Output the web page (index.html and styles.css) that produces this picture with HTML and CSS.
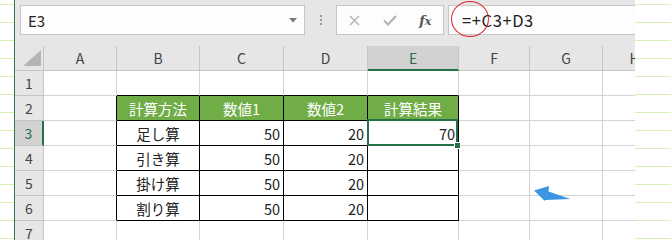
FILE: index.html
```html
<!DOCTYPE html>
<html>
<head>
    <meta charset="utf-8">
    <title>計算結果</title>
    <link rel="stylesheet" href="styles.css">
</head>
<body>
    <div class="page">
        <div class="excel">
            <div class="formula-bar">
                <div class="name-box">
                    <span class="name">E3</span>
                    <svg class="caret" width="8" height="5" viewBox="0 0 8 5"><path d="M0 0H8L4 4.5Z" fill="#7a7a7a"/></svg>
                </div>
                <div class="grip"><i></i><i></i><i></i></div>
                <div class="buttons">
                    <span class="btn"><svg width="11" height="11" viewBox="0 0 11 11"><path d="M1 1L10 10M10 1L1 10" stroke="#b0b0b0" stroke-width="1.4"/></svg></span>
                    <span class="btn"><svg width="14" height="11" viewBox="0 0 14 11"><path d="M1 5.5L5 9.5L13 1" fill="none" stroke="#b0b0b0" stroke-width="2"/></svg></span>
                    <span class="btn fx">f<span class="fx-x">x</span></span>
                </div>
                <div class="formula">=+C3+D3</div>
            </div>
            <div class="mark"></div>

            <div class="sheet">
                <!-- column header -->
                <div class="c hd corner"><span class="tri"></span></div>
                <div class="c hd">A</div>
                <div class="c hd">B</div>
                <div class="c hd">C</div>
                <div class="c hd">D</div>
                <div class="c hd sel">E</div>
                <div class="c hd">F</div>
                <div class="c hd">G</div>
                <div class="c hd">H</div>
                <!-- 1 -->
                <div class="c rh">1</div>
                <div class="c"></div>
                <div class="c tt"></div>
                <div class="c tt"></div>
                <div class="c tt"></div>
                <div class="c tt"></div>
                <div class="c"></div>
                <div class="c"></div>
                <div class="c"></div>
                <!-- 2 -->
                <div class="c rh">2</div>
                <div class="c tl"></div>
                <div class="c t th">計算方法</div>
                <div class="c t th">数値1</div>
                <div class="c t th">数値2</div>
                <div class="c t th">計算結果</div>
                <div class="c"></div>
                <div class="c"></div>
                <div class="c"></div>
                <!-- 3 -->
                <div class="c rh sel">3</div>
                <div class="c tl"></div>
                <div class="c t">足し算</div>
                <div class="c t num">50</div>
                <div class="c t num">20</div>
                <div class="c t num cur">70</div>
                <div class="c"></div>
                <div class="c"></div>
                <div class="c"></div>
                <!-- 4 -->
                <div class="c rh">4</div>
                <div class="c tl"></div>
                <div class="c t">引き算</div>
                <div class="c t num">50</div>
                <div class="c t num">20</div>
                <div class="c t num"></div>
                <div class="c"></div>
                <div class="c"></div>
                <div class="c"></div>
                <!-- 5 -->
                <div class="c rh">5</div>
                <div class="c tl"></div>
                <div class="c t">掛け算</div>
                <div class="c t num">50</div>
                <div class="c t num">20</div>
                <div class="c t num"></div>
                <div class="c"></div>
                <div class="c"></div>
                <div class="c"></div>
                <!-- 6 -->
                <div class="c rh">6</div>
                <div class="c tl"></div>
                <div class="c t">割り算</div>
                <div class="c t num">50</div>
                <div class="c t num">20</div>
                <div class="c t num"></div>
                <div class="c"></div>
                <div class="c"></div>
                <div class="c"></div>
                <!-- 7 -->
                <div class="c rh">7</div>
                <div class="c"></div>
                <div class="c"></div>
                <div class="c"></div>
                <div class="c"></div>
                <div class="c"></div>
                <div class="c"></div>
                <div class="c"></div>
                <div class="c"></div>
            </div>

            <svg class="arrow" width="40" height="18" viewBox="0 0 40 18">
                <path d="M0 5.5L15 1L14.5 6.5L36.5 14L11.5 15L10.5 15.8Z" fill="#3a96e0"/>
            </svg>
        </div>
    </div>
</body>
</html>
```

FILE: styles.css
```css
html,body{
    margin: 0;
    padding: 0;
}
body{
    width: 671px;
    height: 250px;
    overflow: hidden;
    background: repeating-linear-gradient(to bottom, #fff 0, #fff 4px, #d6efb4 4px, #d6efb4 5px, #fff 5px, #fff 18px);
    font-family: "Noto Sans CJK JP", sans-serif;
}
.page{
    display: flex;
    padding-left: 14px;
}
.excel{
    position: relative;
    width: 620px;
    height: 240px;
    border-left: 1px solid #2f7d4e;
    overflow: hidden;
    background: #fff;
}

/* formula bar */
.formula-bar{
    display: flex;
    align-items: flex-start;
    height: 46px;
    box-sizing: border-box;
    padding: 5px 0 0 5px;
    background: #e6e6e6;
}
.name-box,
.buttons,
.formula{
    height: 30px;
    box-sizing: border-box;
    border: 1px solid #c6c6c6;
    background: #fdfdfd;
    display: flex;
    align-items: center;
}
.name-box{
    width: 285px;
    padding: 0 7px;
    font-size: 15px;
    color: #222;
}
.name-box .name{
    flex: 1;
}
.grip{
    width: 31px;
    height: 30px;
    display: flex;
    flex-direction: column;
    align-items: center;
    justify-content: center;
    gap: 2px;
}
.grip i{
    width: 2px;
    height: 2px;
    background: #9a9a9a;
}
.buttons{
    width: 108px;
}
.btn{
    width: 36px;
    display: flex;
    justify-content: center;
    align-items: center;
}
.fx{
    font-family: "DejaVu Serif", serif;
    font-style: italic;
    font-weight: bold;
    font-size: 13px;
    color: #555;
}
.fx-x{
    font-size: 11px;
    position: relative;
    top: 1px;
}
.formula{
    flex: 1;
    margin-left: 4px;
    border-right: none;
    padding-left: 13px;
    font-size: 16.5px;
    letter-spacing: 0.6px;
    color: #222;
}
.mark{
    position: absolute;
    left: 436px;
    top: 1px;
    width: 38px;
    height: 36px;
    box-sizing: border-box;
    border: 1.5px solid #e3242b;
    border-radius: 50%;
}

/* sheet */
.sheet{
    display: grid;
    grid-template-columns: 29px 73px 83px 84px 84px 91px 71px 73px 64px;
    grid-auto-rows: 25px;
}
.c{
    box-sizing: border-box;
    border-right: 1px solid #d4d4d4;
    border-bottom: 1px solid #d4d4d4;
    display: flex;
    align-items: center;
    justify-content: center;
    white-space: nowrap;
    font-size: 14.5px;
    color: #222;
}
.hd,
.rh{
    background: #e6e6e6;
    border-color: #c4c4c4;
    color: #444;
    font-size: 14px;
}
.hd.sel{
    background: #d2d2d2;
    color: #217346;
    border-bottom: 2px solid #217346;
}
.rh.sel{
    background: #d2d2d2;
    color: #217346;
    border-right: 2px solid #217346;
}
.corner{
    align-items: flex-end;
    justify-content: flex-end;
    padding: 0 2px 4px 0;
}
.corner .tri{
    width: 18px;
    height: 16px;
    background: #b5b5b5;
    clip-path: polygon(100% 0, 100% 100%, 0 100%);
}
.t{
    border-color: #000;
}
.tl{
    border-right-color: #000;
}
.tt{
    border-bottom-color: #000;
}
.th{
    background: #70ad47;
    color: #fff;
}
.num{
    justify-content: flex-end;
    padding-right: 3px;
}
.cur{
    position: relative;
}
.cur::before{
    content: "";
    position: absolute;
    left: -1px;
    top: -2px;
    right: 0;
    bottom: -1px;
    border: 2px solid #217346;
}
.cur::after{
    content: "";
    position: absolute;
    left: 86px;
    top: 21px;
    width: 5px;
    height: 5px;
    background: #217346;
    border: 1px solid #fff;
}
.arrow{
    position: absolute;
    left: 519px;
    top: 185px;
}
```
